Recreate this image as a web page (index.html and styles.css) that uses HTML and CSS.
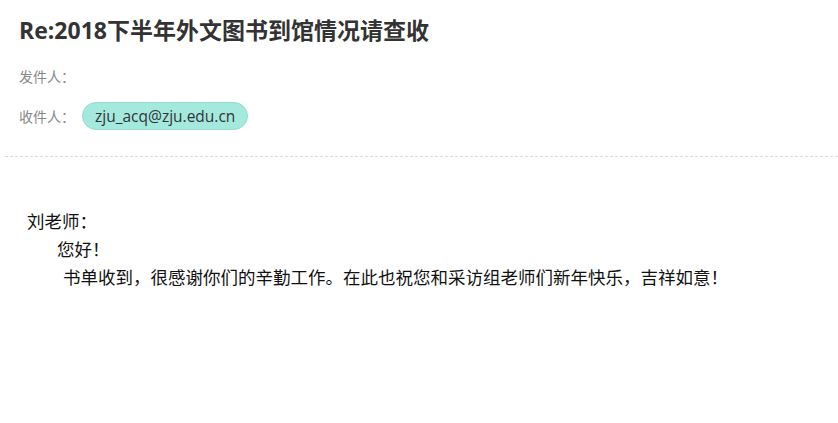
FILE: index.html
```html
<!DOCTYPE html>
<html lang="zh-CN">
<head>
    <meta charset="UTF-8">
    <meta name="viewport" content="width=device-width, initial-scale=1.0">
    <title>Re:2018下半年外文图书到馆情况请查收</title>
    <link rel="stylesheet" href="styles.css">
</head>
<body>
    <div class="mail-head">
        <h1 class="subject">Re:2018下半年外文图书到馆情况请查收</h1>
        <div class="meta-row">
            <span class="meta-label">发件人：</span>
        </div>
        <div class="meta-row">
            <span class="meta-label">收件人：</span>
            <span class="address">zju_acq@zju.edu.cn</span>
        </div>
    </div>
    <div class="mail-body">
        <p class="greet">刘老师：</p>
        <p class="hello">您好！</p>
        <p class="text">书单收到，很感谢你们的辛勤工作。在此也祝您和采访组老师们新年快乐，吉祥如意！</p>
    </div>
</body>
</html>
```

FILE: styles.css
```css
body {
    margin: 0;
    padding: 0;
    background: #fff;
    font-family: "Open Sans", "Noto Sans CJK SC", sans-serif;
    color: #333;
}
.mail-head {
    padding: 14px 0 0 0;
    margin-left: 5px;
    border-bottom: 1px dashed #dcdcdc;
    padding-bottom: 26px;
}
.subject {
    margin: 0 0 0 14px;
    font-size: 23px;
    font-weight: bold;
    line-height: 32px;
    color: #333;
}
.meta-row {
    display: flex;
    align-items: center;
    margin-left: 14px;
    height: 28px;
    margin-top: 16px;
}
.meta-row + .meta-row {
    margin-top: 12px;
}
.meta-label {
    font-size: 14px;
    color: #888;
    font-family: "Noto Sans CJK TC", sans-serif;
}
.address {
    margin-left: 7px;
    padding: 0 12px;
    height: 26px;
    line-height: 26px;
    border: 1px solid #95dccf;
    border-radius: 14px;
    background: #a3e9de;
    font-size: 15.5px;
    color: #333;
}
.mail-body {
    padding: 50px 0 0 27px;
    font-family: "Noto Sans CJK SC", sans-serif;
    font-size: 17.5px;
    color: #111;
}
.mail-body p {
    margin: 0;
    line-height: 28px;
}
.hello {
    padding-left: 30px;
}
.text {
    padding-left: 36px;
}
```
